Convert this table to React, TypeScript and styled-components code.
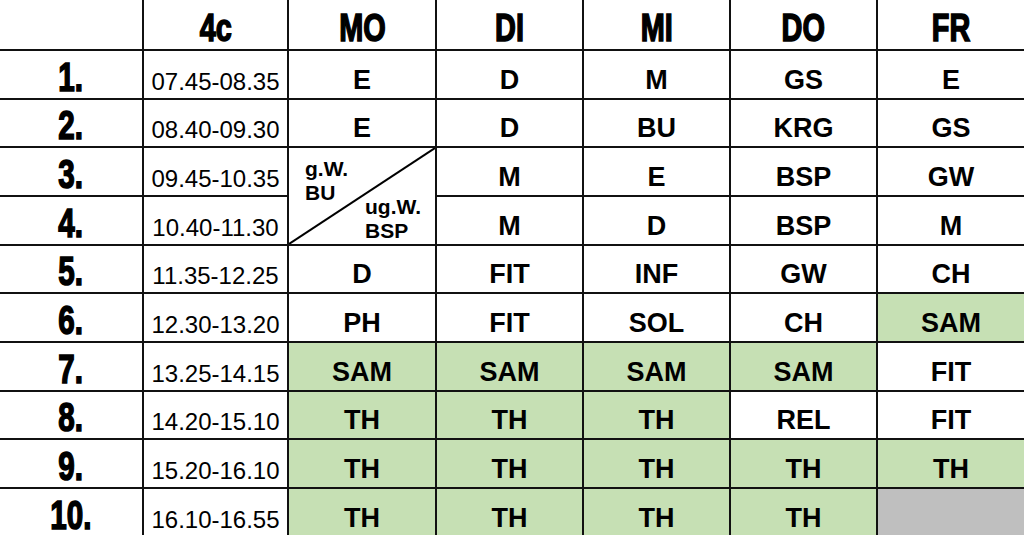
import React from 'react';
import styled, { createGlobalStyle } from 'styled-components';

const Global = createGlobalStyle`
  html, body { margin: 0; padding: 0; background: #fff; overflow: hidden; }
  #root { width: 1024px; height: 535px; overflow: hidden; }
`;

const Table = styled.div`
  display: grid;
  grid-template-columns: 142px 143px 146px 145px 145px 145px 146px;
  grid-template-rows: 49px 47px 46px 47px 47px 46px 47px 47px 46px 47px 47px;
  gap: 2px;
  background: #111;
  width: 1024px;
`;

const BaseCell = styled.div`
  background: #fff;
  display: flex;
  align-items: flex-end;
  justify-content: center;
  color: #000;
  line-height: 1;
  overflow: hidden;
`;

const HeaderCell = styled(BaseCell)`
  font-family: "Liberation Sans", Arial, sans-serif;
  font-weight: 700;
  font-size: 39px;
  padding-bottom: 2px;
`;

const PeriodCell = styled(BaseCell)`
  font-family: "Liberation Sans", Arial, sans-serif;
  font-weight: 700;
  font-size: 40px;
  padding-bottom: 1px;
`;

const Condensed = styled.span`
  display: inline-block;
  transform: scaleX(0.74);
  transform-origin: center bottom;
  -webkit-text-stroke: 1.6px #000;
  white-space: nowrap;
`;

const TimeCell = styled(BaseCell)`
  font-family: "Liberation Sans", Arial, sans-serif;
  font-weight: 400;
  font-size: 24px;
  padding-bottom: 4px;
`;

const SubjectCell = styled(BaseCell)<{ $tone?: 'green' | 'gray' }>`
  background: ${(p) => (p.$tone === 'green' ? '#c6e0b4' : p.$tone === 'gray' ? '#bfbfbf' : '#fff')};
  font-family: "Liberation Sans", Arial, sans-serif;
  font-weight: 700;
  font-size: 27px;
  padding-bottom: 4px;
`;

const SplitCell = styled.div`
  grid-row: span 2;
  position: relative;
  background: #fff;
  display: flex;
  flex-direction: column;
  padding-top: 9px;
  font-family: "Liberation Sans", Arial, sans-serif;
  font-weight: 700;
  font-size: 21px;
  line-height: 24px;
  color: #000;
`;

const SplitTop = styled.div`
  margin-left: 16px;
  position: relative;
`;

const SplitBottom = styled.div`
  margin-left: 76px;
  margin-top: -10px;
  position: relative;
`;

const Diagonal = styled.svg`
  position: absolute;
  inset: 0;
  width: 100%;
  height: 100%;
`;

type Tone = 'green' | 'gray' | undefined;
type Slot = { t: string; c?: Tone } | 'split' | null;

const days = ['MO', 'DI', 'MI', 'DO', 'FR'];
const G: Tone = 'green';

const rows: { n: string; time: string; s: Slot[] }[] = [
  { n: '1.', time: '07.45-08.35', s: [{ t: 'E' }, { t: 'D' }, { t: 'M' }, { t: 'GS' }, { t: 'E' }] },
  { n: '2.', time: '08.40-09.30', s: [{ t: 'E' }, { t: 'D' }, { t: 'BU' }, { t: 'KRG' }, { t: 'GS' }] },
  { n: '3.', time: '09.45-10.35', s: ['split', { t: 'M' }, { t: 'E' }, { t: 'BSP' }, { t: 'GW' }] },
  { n: '4.', time: '10.40-11.30', s: [null, { t: 'M' }, { t: 'D' }, { t: 'BSP' }, { t: 'M' }] },
  { n: '5.', time: '11.35-12.25', s: [{ t: 'D' }, { t: 'FIT' }, { t: 'INF' }, { t: 'GW' }, { t: 'CH' }] },
  { n: '6.', time: '12.30-13.20', s: [{ t: 'PH' }, { t: 'FIT' }, { t: 'SOL' }, { t: 'CH' }, { t: 'SAM', c: G }] },
  { n: '7.', time: '13.25-14.15', s: [{ t: 'SAM', c: G }, { t: 'SAM', c: G }, { t: 'SAM', c: G }, { t: 'SAM', c: G }, { t: 'FIT' }] },
  { n: '8.', time: '14.20-15.10', s: [{ t: 'TH', c: G }, { t: 'TH', c: G }, { t: 'TH', c: G }, { t: 'REL' }, { t: 'FIT' }] },
  { n: '9.', time: '15.20-16.10', s: [{ t: 'TH', c: G }, { t: 'TH', c: G }, { t: 'TH', c: G }, { t: 'TH', c: G }, { t: 'TH', c: G }] },
  { n: '10.', time: '16.10-16.55', s: [{ t: 'TH', c: G }, { t: 'TH', c: G }, { t: 'TH', c: G }, { t: 'TH', c: G }, { t: '', c: 'gray' }] },
];

export default function App() {
  return (
    <>
      <Global />
      <Table>
        <HeaderCell />
        <HeaderCell>
          <Condensed>4c</Condensed>
        </HeaderCell>
        {days.map((d) => (
          <HeaderCell key={d}>
            <Condensed>{d}</Condensed>
          </HeaderCell>
        ))}
        {rows.map((r) => (
          <React.Fragment key={r.n}>
            <PeriodCell>
              <Condensed>{r.n}</Condensed>
            </PeriodCell>
            <TimeCell>{r.time}</TimeCell>
            {r.s.map((slot, i) => {
              if (slot === null) return null;
              if (slot === 'split') {
                return (
                  <SplitCell key={i}>
                    <Diagonal viewBox="0 0 100 100" preserveAspectRatio="none">
                      <line x1="0" y1="100" x2="100" y2="0" stroke="#000" strokeWidth="2" vectorEffect="non-scaling-stroke" />
                    </Diagonal>
                    <SplitTop>
                      g.W.
                      <br />
                      BU
                    </SplitTop>
                    <SplitBottom>
                      ug.W.
                      <br />
                      BSP
                    </SplitBottom>
                  </SplitCell>
                );
              }
              return (
                <SubjectCell key={i} $tone={slot.c}>
                  {slot.t}
                </SubjectCell>
              );
            })}
          </React.Fragment>
        ))}
      </Table>
    </>
  );
}
